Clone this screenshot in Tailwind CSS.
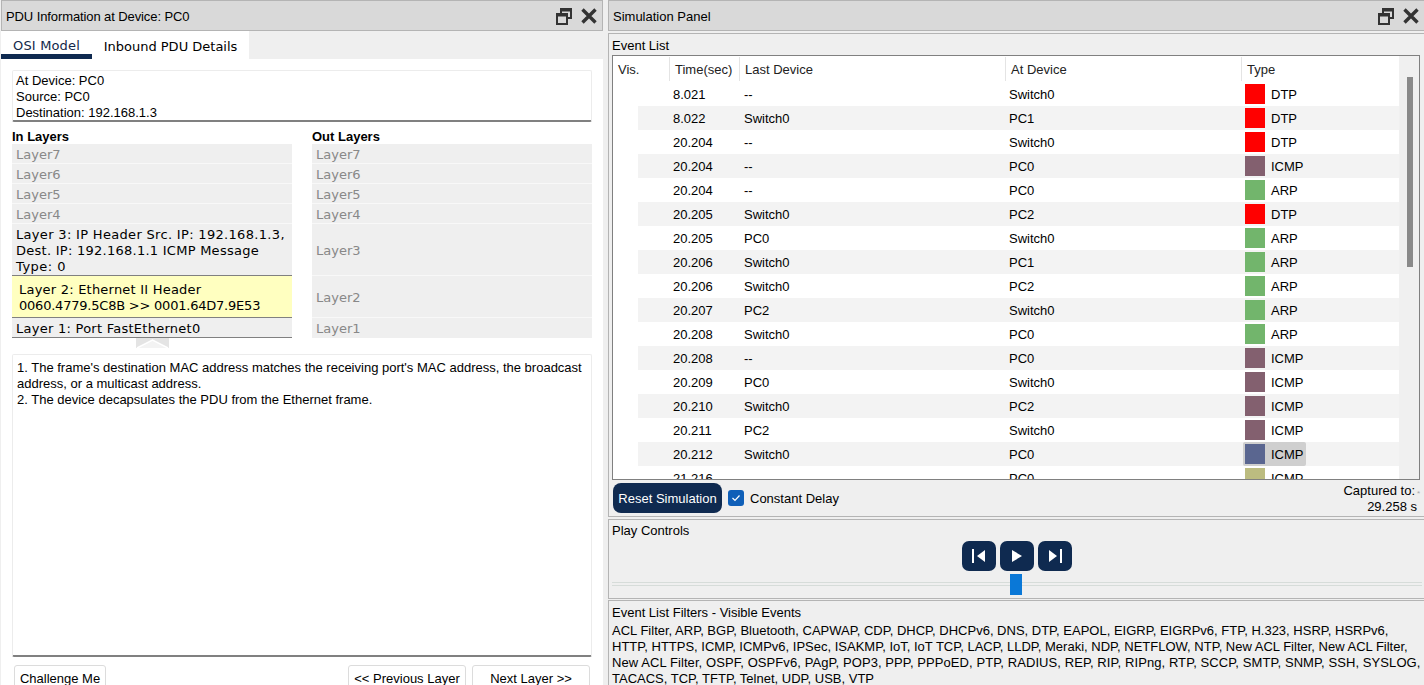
<!DOCTYPE html>
<html lang="en">
<head>
  <meta charset="UTF-8">
  <title>Simulation Panel</title>
  <script src="https://cdn.jsdelivr.net/npm/@tailwindcss/browser@4"></script>
</head>
<body class="bg-[#efefef] font-['Liberation_Sans',sans-serif] text-[13px] leading-[16px] text-black">
  <div class="flex h-[685px] w-[1424px] overflow-hidden">

    <!-- PDU info -->
    <div class="flex w-[603px] shrink-0 flex-col pl-px">
      <div class="flex h-[31px] shrink-0 items-center justify-between border border-[#b4b4b4] bg-[#d9d9d9] pl-[4px] pr-[5px]">
        <span class="pt-[2px] tracking-[-0.1px]">PDU Information at Device: PC0</span>
        <span class="flex items-center gap-[9px]">
          <svg width="16" height="18" viewBox="0 0 16 18" fill="none" stroke="#333" stroke-width="2"><path d="M5 6V2h10v9h-4"/><path d="M1 7h10v10H1z"/><path d="M5 3h10M1 8h10" stroke-width="3"/></svg>
          <svg width="16" height="16" viewBox="0 0 16 16" stroke="#333" stroke-width="3.4"><path d="M1.5 1.5l13 13M14.5 1.5l-13 13"/></svg>
        </span>
      </div>
      <div class="flex h-[28px] shrink-0 font-['DejaVu_Sans',sans-serif] text-[13px]">
        <div class="flex w-[91px] justify-center border-b-[5px] border-[#0f2a50] bg-white pt-[7px] tracking-[0.15px] text-[#14284a]">OSI Model</div>
        <div class="flex w-[157px] items-center justify-center bg-white pt-[3px]">Inbound PDU Details</div>
      </div>
      <div class="flex min-h-0 flex-1 flex-col bg-white pl-[11px] pr-[11px] pt-[11px]">
        <div class="h-[52px] shrink-0 rounded-[2px] border border-b-2 border-[#ececec] border-b-[#808080] px-[3px] pt-[2px]">
          <div>At Device: PC0</div><div>Source: PC0</div><div>Destination: 192.168.1.3</div>
        </div>
        <div class="mt-[7px] flex shrink-0 justify-between font-['DejaVu_Sans',sans-serif] text-[13px] leading-[20px] text-[#888]">
          <div class="w-[280px]">
            <div class="h-[15px] font-['Liberation_Sans',sans-serif] font-bold leading-[15px] text-black">In Layers</div>
            <div class="h-[20px] border-b border-[#f8f8f8] bg-[#efefef] px-[4px] pt-px">Layer7</div>
            <div class="h-[20px] border-b border-[#f8f8f8] bg-[#efefef] px-[4px] pt-px">Layer6</div>
            <div class="h-[20px] border-b border-[#f8f8f8] bg-[#efefef] px-[4px] pt-px">Layer5</div>
            <div class="h-[20px] border-b border-[#f8f8f8] bg-[#efefef] px-[4px] pt-px">Layer4</div>
            <div class="h-[52px] whitespace-nowrap border-b border-[#808080] bg-[#efefef] px-[4px] pt-[3px] leading-[16px] text-black">
              <div class="tracking-[0.32px]">Layer 3: IP Header Src. IP: 192.168.1.3,</div>
              <div class="tracking-[0.26px]">Dest. IP: 192.168.1.1 ICMP Message</div>
              <div class="tracking-[0.5px]">Type: 0</div>
            </div>
            <div class="h-[42px] whitespace-nowrap border-b border-[#808080] bg-[#ffffc0] px-[7px] pt-[6px] leading-[16px] text-black">
              <div class="tracking-[0.22px]">Layer 2: Ethernet II Header</div>
              <div class="tracking-[-0.22px]">0060.4779.5C8B &gt;&gt; 0001.64D7.9E53</div>
            </div>
            <div class="h-[20px] border-b border-[#808080] bg-[#efefef] px-[4px] pt-px tracking-[0.26px] text-black">Layer 1: Port FastEthernet0</div>
          </div>
          <div class="w-[280px]">
            <div class="h-[15px] font-['Liberation_Sans',sans-serif] font-bold leading-[15px] text-black">Out Layers</div>
            <div class="h-[20px] border-b border-[#f8f8f8] bg-[#efefef] px-[4px] pt-px">Layer7</div>
            <div class="h-[20px] border-b border-[#f8f8f8] bg-[#efefef] px-[4px] pt-px">Layer6</div>
            <div class="h-[20px] border-b border-[#f8f8f8] bg-[#efefef] px-[4px] pt-px">Layer5</div>
            <div class="h-[20px] border-b border-[#f8f8f8] bg-[#efefef] px-[4px] pt-px">Layer4</div>
            <div class="flex h-[52px] items-center border-b border-[#f8f8f8] bg-[#efefef] px-[4px] pt-[2px]">Layer3</div>
            <div class="flex h-[42px] items-center border-b border-[#f8f8f8] bg-[#efefef] px-[4px] pt-[2px]">Layer2</div>
            <div class="h-[20px] bg-[#efefef] px-[4px] pt-px">Layer1</div>
          </div>
        </div>
        <div class="h-[16px] shrink-0 pl-[124px]">
          <svg width="33" height="10" viewBox="0 0 33 10" class="block bg-[#e4e4e4]"><path d="M1 10L16.5 2 32 10" fill="#f3f3f3" stroke="#fff" stroke-width="1.5"/></svg>
        </div>
        <div class="h-[303px] shrink-0 rounded-[2px] border border-b-2 border-[#ececec] border-b-[#808080] px-[4px] pt-[5px]">
          1. The frame's destination MAC address matches the receiving port's MAC address, the broadcast address, or a multicast address.<br>2. The device decapsulates the PDU from the Ethernet frame.
        </div>
        <div class="mt-[8px] flex justify-between pl-[2px] pr-[2px]">
          <button class="h-[32px] w-[92px] rounded-[3px] border border-[#dcdcdc] pb-[4px]">Challenge Me</button>
          <span class="flex gap-[6px]">
            <button class="h-[32px] w-[118px] rounded-[3px] border border-[#dcdcdc] pb-[4px]">&lt;&lt; Previous Layer</button>
            <button class="h-[32px] w-[118px] rounded-[3px] border border-[#dcdcdc] pb-[4px]">Next Layer &gt;&gt;</button>
          </span>
        </div>
      </div>
    </div>

    <!-- Simulation panel -->
    <div class="ml-[5px] flex min-w-0 flex-1 flex-col">
      <div class="flex h-[31px] shrink-0 items-center justify-between border-y border-l border-[#b4b4b4] bg-[#d9d9d9] pl-[4px] pr-[5px]">
        <span class="pt-[2px]">Simulation Panel</span>
        <span class="flex items-center gap-[9px]">
          <svg width="16" height="18" viewBox="0 0 16 18" fill="none" stroke="#333" stroke-width="2"><path d="M5 6V2h10v9h-4"/><path d="M1 7h10v10H1z"/><path d="M5 3h10M1 8h10" stroke-width="3"/></svg>
          <svg width="16" height="16" viewBox="0 0 16 16" stroke="#333" stroke-width="3.4"><path d="M1.5 1.5l13 13M14.5 1.5l-13 13"/></svg>
        </span>
      </div>

      <div class="mt-[2px] h-[484px] shrink-0 border border-r-0 border-[#b4b4b4] pl-[3px] pr-[4px]">
        <div class="h-[21px] pt-[4px]">Event List</div>
        <div class="flex h-[425px] border border-[#808080] bg-white">
          <div class="min-w-0 flex-1 overflow-hidden">
            <div class="flex h-[26px] items-center text-[#222]">
              <div class="flex h-[24px] w-[57px] items-center border-r border-[#e4e4e4] pl-[5px] pt-[2px]">Vis.</div>
              <div class="flex h-[24px] w-[70px] items-center border-r border-[#e4e4e4] pl-[5px] pt-[2px]">Time(sec)</div>
              <div class="flex h-[24px] w-[266px] items-center border-r border-[#e4e4e4] pl-[5px] pt-[2px]">Last Device</div>
              <div class="flex h-[24px] w-[236px] items-center border-r border-[#e4e4e4] pl-[5px] pt-[2px]">At Device</div>
              <div class="flex h-[24px] items-center pl-[5px] pt-[2px]">Type</div>
            </div>
            <div id="rows"></div>
          </div>
          <div class="relative w-[20px] shrink-0 bg-[#f0f0f0]">
            <div class="absolute left-[8px] top-[21px] h-[190px] w-[6px] bg-[#8a8a8a]"></div>
          </div>
        </div>
        <div class="flex h-[36px] items-center justify-between">
          <div class="flex items-center">
            <button class="ml-px h-[30px] w-[109px] rounded-[8px] bg-[#0f2a50] pt-[2px] text-white">Reset Simulation</button>
            <span class="ml-[6px] flex h-[16px] w-[16px] items-center justify-center rounded-[3px] bg-[#0f5fb8]">
              <svg width="10" height="8" viewBox="0 0 10 8" fill="none" stroke="#fff" stroke-width="1.2"><path d="M1.5 4l2.5 2.5 4.5-5"/></svg>
            </span>
            <span class="ml-[6px] pt-[2px]">Constant Delay</span>
          </div>
          <div class="pt-[2px] text-right">
            <div class="relative pr-[5px]">Captured to:<span class="absolute bottom-[1px] right-0 text-[8px] leading-[8px] text-[#a9a9a9]">*</span></div>
            <div class="pr-[3px]">29.258 s</div>
          </div>
        </div>
      </div>

      <div class="mt-[2px] h-[80px] shrink-0 border border-r-0 border-[#b4b4b4] pl-[3px]">
        <div class="h-[18px] pt-[3px]">Play Controls</div>
        <div class="mt-[3px] flex justify-center gap-[4px] pr-[2px]">
          <span class="flex h-[30px] w-[34px] items-center justify-center rounded-[7px] bg-[#0f2a50]"><svg width="16" height="14" viewBox="0 0 16 14" fill="#fff"><path d="M1 0h2v14H1zM14 1v12L6 7z"/></svg></span>
          <span class="flex h-[30px] w-[34px] items-center justify-center rounded-[7px] bg-[#0f2a50]"><svg width="10" height="12" viewBox="0 0 10 12" fill="#fff"><path d="M0 0v12l10-6z"/></svg></span>
          <span class="flex h-[30px] w-[34px] items-center justify-center rounded-[7px] bg-[#0f2a50]"><svg width="16" height="14" viewBox="0 0 16 14" fill="#fff"><path d="M13 0h2v14h-2zM2 1v12l8-6z"/></svg></span>
        </div>
        <div class="relative mr-[2px] mt-[11px] h-[4px] border-y border-[#d6dcd9]">
          <div class="absolute left-[398px] top-[-9px] h-[21px] w-[12px] bg-[#0a78d7]"></div>
        </div>
      </div>

      <div class="mt-px min-h-0 flex-1 whitespace-nowrap border-l border-t border-[#b4b4b4] pl-[3px] pt-[4px]">
        <div>Event List Filters - Visible Events</div>
        <div class="mt-[2px]">ACL Filter, ARP, BGP, Bluetooth, CAPWAP, CDP, DHCP, DHCPv6, DNS, DTP, EAPOL, EIGRP, EIGRPv6, FTP, H.323, HSRP, HSRPv6,<br>HTTP, HTTPS, ICMP, ICMPv6, IPSec, ISAKMP, IoT, IoT TCP, LACP, LLDP, Meraki, NDP, NETFLOW, NTP, New ACL Filter, New ACL Filter,<br><span class="tracking-[0.08px]">New ACL Filter, OSPF, OSPFv6, PAgP, POP3, PPP, PPPoED, PTP, RADIUS, REP, RIP, RIPng, RTP, SCCP, SMTP, SNMP, SSH, SYSLOG,</span><br>TACACS, TCP, TFTP, Telnet, UDP, USB, VTP</div>
      </div>
    </div>
  </div>

  <script>
    const colors = { DTP: '#ff0000', ICMP: '#83606f', ARP: '#72b56c' };
    const events = [
      ['8.021', '--', 'Switch0', 'DTP'],
      ['8.022', 'Switch0', 'PC1', 'DTP'],
      ['20.204', '--', 'Switch0', 'DTP'],
      ['20.204', '--', 'PC0', 'ICMP'],
      ['20.204', '--', 'PC0', 'ARP'],
      ['20.205', 'Switch0', 'PC2', 'DTP'],
      ['20.205', 'PC0', 'Switch0', 'ARP'],
      ['20.206', 'Switch0', 'PC1', 'ARP'],
      ['20.206', 'Switch0', 'PC2', 'ARP'],
      ['20.207', 'PC2', 'Switch0', 'ARP'],
      ['20.208', 'Switch0', 'PC0', 'ARP'],
      ['20.208', '--', 'PC0', 'ICMP'],
      ['20.209', 'PC0', 'Switch0', 'ICMP'],
      ['20.210', 'Switch0', 'PC2', 'ICMP'],
      ['20.211', 'PC2', 'Switch0', 'ICMP'],
      ['20.212', 'Switch0', 'PC0', 'ICMP'],
      ['21.216', '', 'PC0', 'ICMP']
    ];
    document.getElementById('rows').innerHTML = events.map(function (e, i) {
      const stripe = i % 2 ? 'bg-[#f3f3f3]' : '';
      const last = i === 15;
      const color = last ? '#5a6690' : (i === 16 ? '#bcbc80' : colors[e[3]]);
      const tag = last ? 'bg-[#cfcfcf] rounded-[2px]' : '';
      return `<div class="flex h-[24px] items-center ml-[25px] ${stripe}">
        <div class="w-[35px] shrink-0"></div>
        <div class="w-[71px] shrink-0 pt-[2px]">${e[0]}</div>
        <div class="w-[265px] shrink-0 pt-[2px]">${e[1]}</div>
        <div class="w-[234px] shrink-0 pt-[2px]">${e[2]}</div>
        <div class="flex h-[24px] w-[63px] items-center pl-[2px] ${tag}">
          <span class="h-[20px] w-[20px] shrink-0" style="background:${color}"></span>
          <span class="ml-[6px] pt-[2px]">${e[3]}</span>
        </div>
      </div>`;
    }).join('');
  </script>
</body>
</html>
